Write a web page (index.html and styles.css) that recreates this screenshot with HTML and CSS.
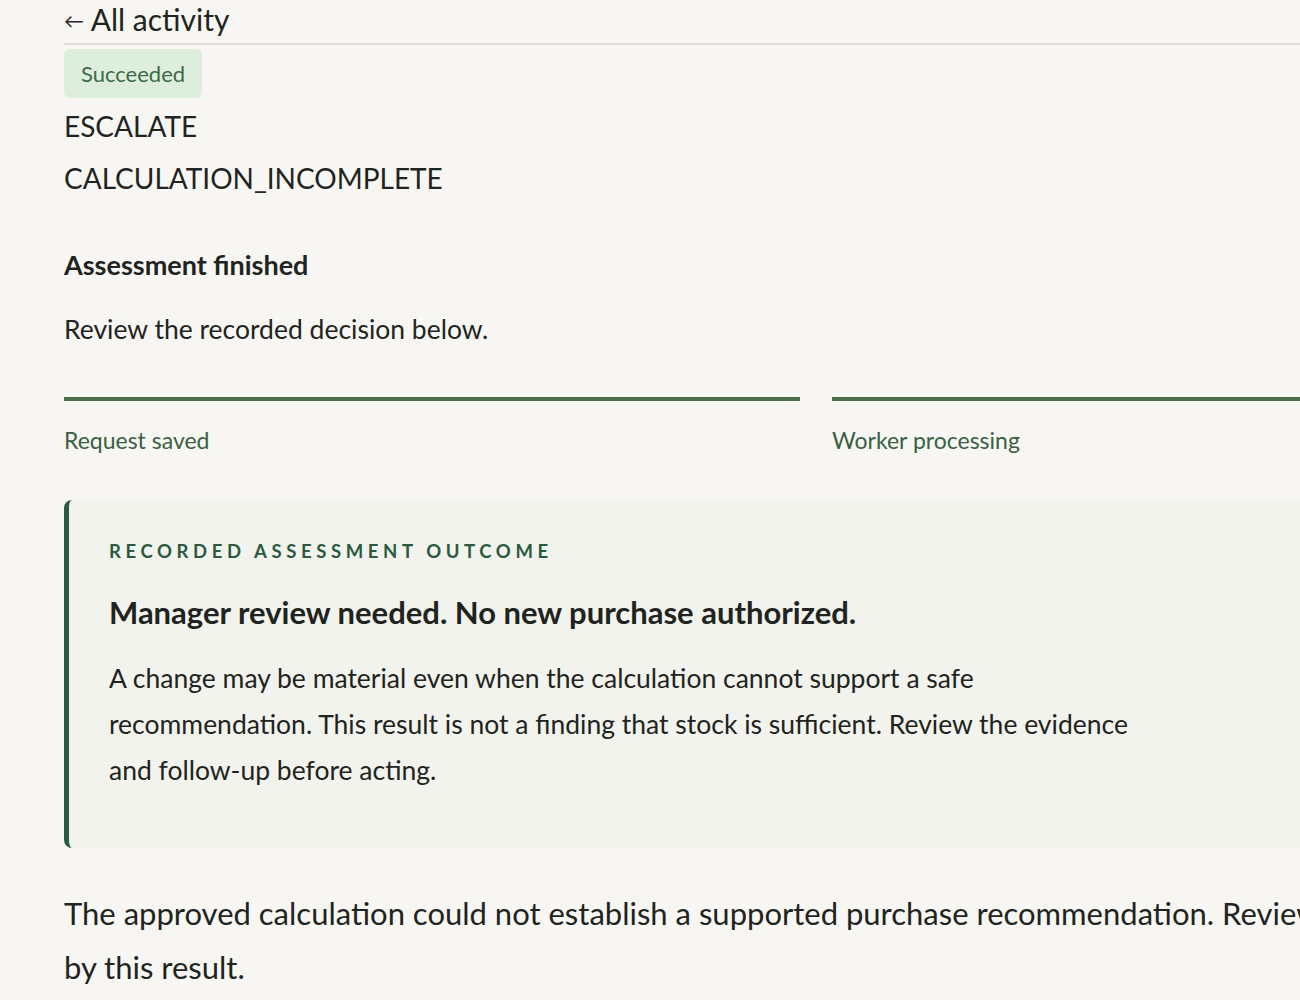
FILE: index.html
```html
<!DOCTYPE html>
<html lang="en">
<head>
    <meta charset="UTF-8">
    <meta name="viewport" content="width=device-width, initial-scale=1.0">
    <title>Activity detail</title>
    <link rel="stylesheet" href="styles.css">
</head>
<body>
    <main class="page">
        <header class="page-head">
            <a class="back-link" href="#"><span class="arrow">&larr;</span> All activity</a>
        </header>

        <span class="status-badge">Succeeded</span>
        <p class="code-line">ESCALATE</p>
        <p class="code-line">CALCULATION_INCOMPLETE</p>

        <section class="summary">
            <h2>Assessment finished</h2>
            <p>Review the recorded decision below.</p>
        </section>

        <!-- progress steps -->
        <ol class="steps">
            <li class="step done">Request saved</li>
            <li class="step done">Worker processing</li>
        </ol>

        <section class="outcome">
            <p class="outcome-label">Recorded assessment outcome</p>
            <h3>Manager review needed. No new purchase authorized.</h3>
            <p class="outcome-text">A change may be material even when the calculation cannot support a safe recommendation. This result is not a finding that stock is sufficient. Review the evidence and follow-up before acting.</p>
        </section>

        <p class="result-text">The approved calculation could not establish a supported purchase recommendation. Review anything affected by this result.</p>
    </main>
</body>
</html>
```

FILE: styles.css
```css
html {
    overflow-x: hidden;
}

body {
    margin: 0;
    background-color: #f7f6f2;
    color: #1f2421;
    font-family: Lato, "Noto Sans", sans-serif;
}

.page {
    width: 1504px;
    padding: 0 64px;
}

.page-head {
    border-bottom: 2px solid #dfded9;
    padding-bottom: 4px;
}

.back-link {
    color: #1f2421;
    text-decoration: none;
    font-size: 30px;
    line-height: 38px;
}

.back-link .arrow {
    font-size: 20px;
    vertical-align: 3px;
}

.status-badge {
    display: inline-block;
    margin-top: 4px;
    padding: 10px 17px;
    background-color: #deeedc;
    border-radius: 6px;
    color: #3d6b47;
    font-size: 22px;
    line-height: 29px;
}

.code-line {
    margin: 0;
    font-size: 28px;
    line-height: 52px;
}

.code-line:first-of-type {
    margin-top: 2px;
}

.summary {
    margin-top: 44px;
}

.summary h2 {
    margin: 0;
    font-size: 27px;
    font-weight: 700;
    line-height: 34px;
}

.summary p {
    margin: 30px 0 0;
    font-size: 26.5px;
    line-height: 34px;
}

.steps {
    list-style: none;
    margin: 51px 0 0;
    padding: 0;
    display: grid;
    grid-template-columns: 1fr 1fr;
    gap: 32px;
}

.step {
    border-top: 4px solid #4a6d4d;
    padding-top: 24px;
    color: #3a5f43;
    font-size: 23px;
    line-height: 30px;
}

.outcome {
    margin-top: 45px;
    padding: 38px 40px 55px;
    background-color: #f1f3ec;
    border-left: 5px solid #2a5a40;
    border-radius: 8px;
}

.outcome-label {
    margin: 0;
    color: #2a5a40;
    font-size: 18.5px;
    font-weight: 700;
    letter-spacing: 4.6px;
    text-transform: uppercase;
    line-height: 26px;
}

.outcome h3 {
    margin: 29px 0 0;
    font-size: 31px;
    font-weight: 700;
    line-height: 38px;
}

.outcome-text {
    max-width: 1040px;
    margin: 24px 0 0;
    font-size: 26.5px;
    line-height: 46px;
}

.result-text {
    margin: 38px 0 0;
    font-size: 31px;
    line-height: 54px;
}
```
